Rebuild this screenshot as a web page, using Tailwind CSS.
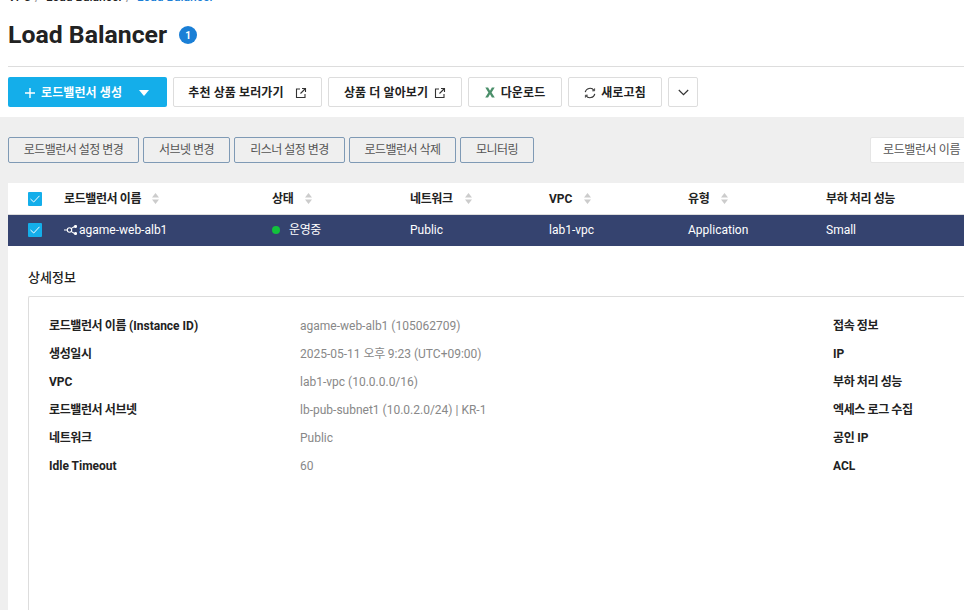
<!DOCTYPE html>
<html lang="ko">
<head>
  <meta charset="UTF-8" />
  <title>Load Balancer</title>
  <script src="https://cdn.jsdelivr.net/npm/@tailwindcss/browser@4"></script>
</head>
<body class="h-[610px] overflow-hidden bg-white text-[12px] text-[#222] font-['Roboto','Noto_Sans_CJK_KR',sans-serif]">

  <!-- 상단 -->
  <div class="px-2 h-[117px] overflow-hidden">
    <div class="-mt-[8px] h-[11px] flex items-center text-[12px] leading-[11px] font-medium">
      <span class="w-[27px]">VPC</span><span class="w-[11px] text-[#999]">/</span>
      <span class="w-[80px]">Load Balancer</span><span class="w-[11px] text-[#999]">/</span>
      <span class="text-[#1a7fd6]">Load Balancer</span>
    </div>
    <div class="flex items-center h-[52px] mt-[6px]">
      <h1 class="text-[24.8px] leading-[32px] font-bold text-[#222]">Load Balancer</h1>
      <span class="ml-3 w-[18px] h-[18px] rounded-full bg-[#1a7fd6] text-white text-[10px] font-bold flex items-center justify-center">1</span>
    </div>
    <div class="mr-[-8px] border-t border-[#ddd] mt-[5px]"></div>
    <div class="flex gap-[6px] mt-[10px] h-[30px] font-bold tracking-[0.1px]">
      <button class="w-[159px] pt-[1px] rounded-[2px] bg-[#14aeea] text-white flex items-center pl-[16px]">
        <svg class="w-[12px] h-[12px] mr-[5px]" viewBox="0 0 12 12"><path d="M6 1v10M1 6h10" stroke="#fff" stroke-width="1.4"/></svg>
        로드밸런서 생성
        <svg class="w-[10px] h-[6px] ml-[17px]" viewBox="0 0 10 6"><path d="M0 0h10L5 6z" fill="#fff"/></svg>
      </button>
      <button class="w-[149px] pt-[1px] rounded-[2px] border border-[#ddd] bg-white flex items-center justify-center gap-[11px]">
        추천 상품 보러가기
        <svg class="w-[12px] h-[12px]" viewBox="0 0 12 12" fill="none" stroke="#333" stroke-width="1.1"><path d="M5 2H1.5v8.5H10V7M7 1.5h3.5V5M10.5 1.5 5.5 6.5"/></svg>
      </button>
      <button class="w-[134px] pt-[1px] rounded-[2px] border border-[#ddd] bg-white flex items-center justify-center gap-[6px]">
        상품 더 알아보기
        <svg class="w-[12px] h-[12px]" viewBox="0 0 12 12" fill="none" stroke="#333" stroke-width="1.1"><path d="M5 2H1.5v8.5H10V7M7 1.5h3.5V5M10.5 1.5 5.5 6.5"/></svg>
      </button>
      <button class="w-[94px] pt-[1px] rounded-[2px] border border-[#ddd] bg-white flex items-center justify-center gap-[6px]">
        <svg class="w-[10px] h-[11px]" viewBox="0 0 10 11"><path d="M0.3 0.5h2.8L5 3.8 6.9 0.5h2.8L6.6 5.5l3.2 5H6.9L5 7.2 3.1 10.5H0.2l3.2-5z" fill="#4b8f6a"/></svg>
        다운로드
      </button>
      <button class="w-[94px] pt-[1px] rounded-[2px] border border-[#ddd] bg-white flex items-center justify-center gap-[5px]">
        <svg class="w-[12px] h-[12px]" viewBox="0 0 12 12" fill="none" stroke="#333" stroke-width="1.1"><path d="M1.2 5.2A4.9 4.9 0 0 1 10 3.4M10.8 6.8A4.9 4.9 0 0 1 2 8.6"/><path d="M10.6 1.4v2.4H8.2M1.4 10.6V8.2h2.4" stroke-width="0.9"/></svg>
        새로고침
      </button>
      <button class="w-[30px] rounded-[2px] border border-[#ddd] bg-white flex items-center justify-center">
        <svg class="w-[11px] h-[7px]" viewBox="0 0 11 7" fill="none" stroke="#333" stroke-width="1.2"><path d="M0.8 1 5.5 5.6 10.2 1"/></svg>
      </button>
    </div>
  </div>

  <!-- 목록 영역 -->
  <div class="h-[493px] bg-[#efefef] pl-2 overflow-hidden">
    <div class="flex h-[66px] pt-[20px]">
      <div class="flex gap-[4px] h-[26px] text-[#555] tracking-[-0.55px]">
        <button class="w-[131px] rounded-[2px] border border-[#7f9ab5]">로드밸런서 설정 변경</button>
        <button class="w-[87px] rounded-[2px] border border-[#7f9ab5]">서브넷 변경</button>
        <button class="w-[111px] rounded-[2px] border border-[#7f9ab5]">리스너 설정 변경</button>
        <button class="w-[107px] rounded-[2px] border border-[#7f9ab5]">로드밸런서 삭제</button>
        <button class="w-[74px] rounded-[2px] border border-[#7f9ab5]">모니터링</button>
      </div>
      <div class="ml-[336px] w-[120px] h-[26px] shrink-0 rounded-[2px] bg-white border border-[#e5e5e5] flex items-center pl-[12px] text-[#555] tracking-[-0.4px]">로드밸런서 이름</div>
    </div>

    <div class="bg-white h-[427px]">
      <!-- 헤더 -->
      <div class="flex items-center h-[32px] border-b border-[#ddd] font-bold">
        <div class="w-[56px] pl-[20px]">
          <span class="w-[14px] h-[14px] rounded-[1px] bg-[#14aeea] flex items-center justify-center">
            <svg class="w-[10px] h-[8px]" viewBox="0 0 10 8" fill="none" stroke="#fff" stroke-width="1"><path d="M0.5 4 3.7 7 9.5 0.8"/></svg>
          </span>
        </div>
        <div class="w-[208px] flex items-center gap-[11px]"><span class="tracking-[-0.4px]">로드밸런서 이름</span>
          <svg class="w-[7px] h-[11px]" viewBox="0 0 7 11" fill="#ccc"><path d="M3.5 0 7 4.5H0zM3.5 11 0 6.5h7z"/></svg>
        </div>
        <div class="w-[138px] flex items-center gap-[12px]"><span class="tracking-[-0.4px]">상태</span>
          <svg class="w-[7px] h-[11px]" viewBox="0 0 7 11" fill="#ccc"><path d="M3.5 0 7 4.5H0zM3.5 11 0 6.5h7z"/></svg>
        </div>
        <div class="w-[139px] flex items-center gap-[12px]"><span class="tracking-[-0.4px]">네트워크</span>
          <svg class="w-[7px] h-[11px]" viewBox="0 0 7 11" fill="#ccc"><path d="M3.5 0 7 4.5H0zM3.5 11 0 6.5h7z"/></svg>
        </div>
        <div class="w-[139px] flex items-center gap-[12px]">VPC
          <svg class="w-[7px] h-[11px]" viewBox="0 0 7 11" fill="#ccc"><path d="M3.5 0 7 4.5H0zM3.5 11 0 6.5h7z"/></svg>
        </div>
        <div class="w-[138px] flex items-center gap-[12px]"><span class="tracking-[-0.4px]">유형</span>
          <svg class="w-[7px] h-[11px]" viewBox="0 0 7 11" fill="#ccc"><path d="M3.5 0 7 4.5H0zM3.5 11 0 6.5h7z"/></svg>
        </div>
        <div class="tracking-[-0.4px]">부하 처리 성능</div>
      </div>
      <!-- 선택된 행 -->
      <div class="flex items-center h-[31px] pb-[1px] bg-[#35436f] text-white">
        <div class="w-[56px] pl-[20px]">
          <span class="w-[14px] h-[14px] rounded-[1px] bg-[#14aeea] flex items-center justify-center">
            <svg class="w-[10px] h-[8px]" viewBox="0 0 10 8" fill="none" stroke="#fff" stroke-width="1"><path d="M0.5 4 3.7 7 9.5 0.8"/></svg>
          </span>
        </div>
        <div class="w-[208px] flex items-center gap-[2px]">
          <svg class="w-[13px] h-[10px]" viewBox="0 0 13 10" fill="none" stroke="#fff" stroke-width="1.1"><path d="M0 5h3.5M7 3.6 10.5 1.5M7 6.4l3.5 2.1"/><circle cx="5.5" cy="5" r="2.2"/><circle cx="11.5" cy="1.5" r="1" fill="#fff"/><circle cx="11.5" cy="8.5" r="1" fill="#fff"/></svg>
          agame-web-alb1
        </div>
        <div class="w-[138px] flex items-center gap-[9px]"><span class="w-[8px] h-[8px] rounded-full bg-[#12c23c]"></span><span class="tracking-[-0.4px]">운영중</span></div>
        <div class="w-[139px]">Public</div>
        <div class="w-[139px]">lab1-vpc</div>
        <div class="w-[138px]">Application</div>
        <div>Small</div>
      </div>

      <!-- 상세정보 -->
      <div class="pl-[20px] pt-[24px]">
        <h2 class="text-[13px] leading-[16px] font-medium">상세정보</h2>
        <div class="mt-[10px] h-[400px] rounded-tl-[2px] border border-[#ddd] border-r-0 pl-[20px] pt-[15px] flex">
          <div class="w-[251px] shrink-0 flex flex-col font-bold">
            <div class="h-[28px] leading-[28px]"><span class="tracking-[-0.4px]">로드밸런서 이름</span> (Instance ID)</div>
            <div class="h-[28px] leading-[28px] tracking-[-0.4px]">생성일시</div>
            <div class="h-[28px] leading-[28px]">VPC</div>
            <div class="h-[28px] leading-[28px] tracking-[-0.4px]">로드밸런서 서브넷</div>
            <div class="h-[28px] leading-[28px] tracking-[-0.4px]">네트워크</div>
            <div class="h-[28px] leading-[28px]">Idle Timeout</div>
          </div>
          <div class="w-[533px] shrink-0 flex flex-col text-[#888]">
            <div class="h-[28px] leading-[28px]">agame-web-alb1 (105062709)</div>
            <div class="h-[28px] leading-[28px]">2025-05-11 <span class="tracking-[-0.4px]">오후</span> 9:23 (UTC+09:00)</div>
            <div class="h-[28px] leading-[28px]">lab1-vpc (10.0.0.0/16)</div>
            <div class="h-[28px] leading-[28px]">lb-pub-subnet1 (10.0.2.0/24) | KR-1</div>
            <div class="h-[28px] leading-[28px]">Public</div>
            <div class="h-[28px] leading-[28px]">60</div>
          </div>
          <div class="flex flex-col font-bold">
            <div class="h-[28px] leading-[28px] tracking-[-0.4px]">접속 정보</div>
            <div class="h-[28px] leading-[28px]">IP</div>
            <div class="h-[28px] leading-[28px] tracking-[-0.4px]">부하 처리 성능</div>
            <div class="h-[28px] leading-[28px] tracking-[-0.4px]">엑세스 로그 수집</div>
            <div class="h-[28px] leading-[28px]"><span class="tracking-[-0.4px]">공인</span> IP</div>
            <div class="h-[28px] leading-[28px]">ACL</div>
          </div>
        </div>
      </div>
    </div>
  </div>
</body>
</html>
